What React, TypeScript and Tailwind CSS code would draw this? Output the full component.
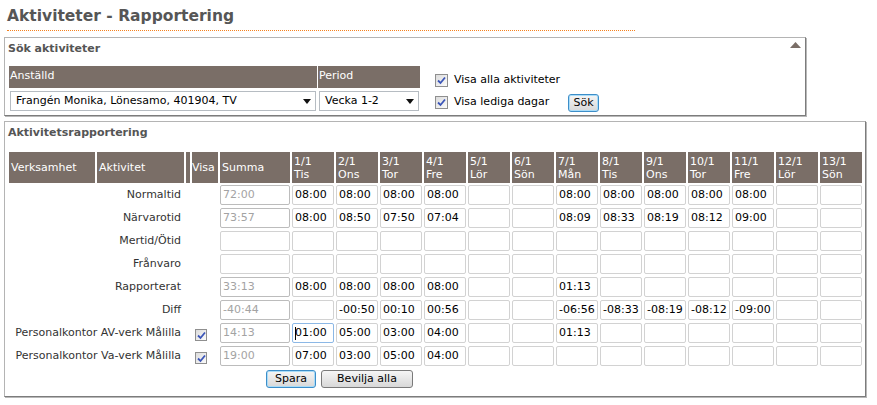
import React from 'react';

const days = [
  ['1/1', 'Tis'], ['2/1', 'Ons'], ['3/1', 'Tor'], ['4/1', 'Fre'], ['5/1', 'Lör'], ['6/1', 'Sön'],
  ['7/1', 'Mån'], ['8/1', 'Tis'], ['9/1', 'Ons'], ['10/1', 'Tor'], ['11/1', 'Fre'], ['12/1', 'Lör'], ['13/1', 'Sön'],
];

type Row = { label: string; summa: string | null; values: string[]; visa?: boolean; focus?: number };

const rows: Row[] = [
  { label: 'Normaltid', summa: '72:00', values: ['08:00', '08:00', '08:00', '08:00', '', '', '08:00', '08:00', '08:00', '08:00', '08:00', '', ''] },
  { label: 'Närvarotid', summa: '73:57', values: ['08:00', '08:50', '07:50', '07:04', '', '', '08:09', '08:33', '08:19', '08:12', '09:00', '', ''] },
  { label: 'Mertid/Ötid', summa: null, values: Array(13).fill('') },
  { label: 'Frånvaro', summa: null, values: Array(13).fill('') },
  { label: 'Rapporterat', summa: '33:13', values: ['08:00', '08:00', '08:00', '08:00', '', '', '01:13', '', '', '', '', '', ''] },
  { label: 'Diff', summa: '-40:44', values: ['', '-00:50', '00:10', '00:56', '', '', '-06:56', '-08:33', '-08:19', '-08:12', '-09:00', '', ''] },
  { label: 'Personalkontor AV-verk Målilla', summa: '14:13', visa: true, focus: 0, values: ['01:00', '05:00', '03:00', '04:00', '', '', '01:13', '', '', '', '', '', ''] },
  { label: 'Personalkontor Va-verk Målilla', summa: '19:00', visa: true, values: ['07:00', '03:00', '05:00', '04:00', '', '', '', '', '', '', '', '', ''] },
];

const Check = ({ size = 'w-[13px] h-[13px]' }: { size?: string }) => (
  <span className={`inline-flex ${size} border border-[#8f8f8f] bg-gradient-to-br from-[#dcdcdc] to-[#fbfbfb] items-center justify-center align-middle`}>
    <svg width="9" height="9" viewBox="0 0 9 9">
      <path d="M1 4.5 L3.5 7 L8 1.5" fill="none" stroke="#3b55b8" strokeWidth="1.8" />
    </svg>
  </span>
);

const Select = ({ text, width }: { text: string; width: string }) => (
  <div className={`${width} h-[20px] border border-[#b6bcc2] bg-white flex items-center pl-[5px] pr-[4px] text-black`}>
    <span className="flex-1 whitespace-nowrap">{text}</span>
    <svg width="8" height="5" viewBox="0 0 8 5">
      <path d="M0 0 H8 L4 5 Z" fill="#111" />
    </svg>
  </div>
);

const Btn = ({ children, blue, width }: { children: React.ReactNode; blue?: boolean; width: string }) => (
  <button
    className={`${width} h-[18px] rounded-[3px] border leading-[14px] text-black bg-gradient-to-b from-[#f6f6f6] to-[#d8d8d8] ${
      blue ? 'border-[#3d8ec9] shadow-[inset_0_0_0_1px_#a9dcf8]' : 'border-[#7a7a7a]'
    }`}
  >
    {children}
  </button>
);

const Cell = ({ value, summa, focus }: { value: string; summa?: boolean; focus?: boolean }) => (
  <div
    className={`h-[20px] rounded-[2px] border bg-white pl-[2px] flex items-center whitespace-nowrap overflow-hidden ${
      summa ? 'border-[#bcbcbc] text-[#a3a3a3]' : focus ? 'border-[#8cb8e6] text-black' : 'border-[#d2d2d2] text-black'
    }`}
  >
    {focus && <span className="inline-block w-px h-[13px] bg-black -mr-px" />}
    {value}
  </div>
);

const th = 'bg-[#7a6e67] text-white font-normal text-left align-middle leading-[13px] px-[2px]';

export default function App() {
  return (
    <div className="w-[877px] h-[405px] bg-white overflow-hidden font-['DejaVu_Sans',Verdana,sans-serif] text-[11px] text-[#333]">
      <div className="pl-[7px] pt-[6px]">
        <h1 className="w-[628px] border-b border-dotted border-b-[#f5821f] text-[15.5px] font-bold text-[#565656] leading-[20px] pb-[4px]">
          Aktiviteter - Rapportering
        </h1>
      </div>

      <div className="relative ml-[4px] mt-[6px] w-[802px] h-[79px] border border-[#b4b4b4] border-r-[#7c7c7c] border-b-[#7c7c7c] shadow-[1px_1px_0_#b8b8b8]">
        <svg className="absolute right-[4px] top-[4px]" width="11" height="6" viewBox="0 0 11 6">
          <path d="M0 6 L5.5 0 L11 6 Z" fill="#7a6e67" />
        </svg>
        <div className="pl-[3px] pt-[4px] font-bold text-[#555] leading-[14px]">Sök aktiviteter</div>
        <div className="flex mt-[10px] pl-[4px]">
          <div className="grid grid-cols-[308px_102px] gap-x-[1px] gap-y-[3px]">
            <div className="h-[22px] bg-[#7a6e67] text-white pl-[1px] leading-[20px]">Anställd</div>
            <div className="h-[22px] bg-[#7a6e67] text-white pl-[1px] leading-[20px]">Period</div>
            <div className="px-[1px]">
              <Select text="Frangén Monika, Lönesamo, 401904, TV" width="w-[306px]" />
            </div>
            <div className="px-[1px]">
              <Select text="Vecka 1-2" width="w-[100px]" />
            </div>
          </div>
          <div className="ml-[15px] pt-[8px] text-black">
            <div className="flex items-center gap-[6px] h-[13px]">
              <Check />
              <span>Visa alla aktiviteter</span>
            </div>
            <div className="flex items-center mt-[7px] h-[17px]">
              <Check />
              <span className="ml-[6px] w-[114px]">Visa lediga dagar</span>
              <Btn blue width="w-[31px]">Sök</Btn>
            </div>
          </div>
        </div>
      </div>

      <div className="ml-[4px] mt-[5px] w-[862px] h-[276px] border border-[#b4b4b4] border-r-[#7c7c7c] border-b-[#7c7c7c] shadow-[1px_1px_0_#b8b8b8]">
        <div className="pl-[3px] pt-[4px] font-bold text-[#555] leading-[14px]">Aktivitetsrapportering</div>
        <table className="table-fixed border-separate border-spacing-x-[2px] border-spacing-y-[2px] mt-[10px] ml-[2px] w-[857px]">
          <colgroup>
            <col className="w-[86px]" />
            <col className="w-[87px]" />
            <col className="w-[4px]" />
            <col className="w-[26px]" />
            <col className="w-[70px]" />
            {days.map((_, i) => (
              <col key={i} className="w-[42px]" />
            ))}
          </colgroup>
          <thead>
            <tr className="h-[31px]">
              <th className={th}>Verksamhet</th>
              <th className={th}>Aktivitet</th>
              <th className="bg-[#7a6e67] p-0" />
              <th className={`${th} !px-0`}>Visa</th>
              <th className={th}>Summa</th>
              {days.map(([d, w]) => (
                <th key={d} className={th}>
                  {d}
                  <br />
                  {w}
                </th>
              ))}
            </tr>
          </thead>
          <tbody>
            {rows.map((r) => (
              <tr key={r.label}>
                <td colSpan={2} className="h-[21px] p-0 pr-[3px] text-right align-top leading-[20px] whitespace-nowrap">
                  {r.label}
                </td>
                <td className="p-0" />
                <td className="p-0 pl-[3px] align-top pt-[4px]">{r.visa && <Check size="w-[12px] h-[12px]" />}</td>
                <td className="p-0 align-top">
                  <Cell value={r.summa ?? ''} summa={r.summa !== null} />
                </td>
                {r.values.map((v, i) => (
                  <td key={i} className="p-0 align-top">
                    <Cell value={v} focus={r.focus === i} />
                  </td>
                ))}
              </tr>
            ))}
          </tbody>
        </table>
        <div className="flex gap-[5px] pl-[261px] mt-[1px]">
          <Btn blue width="w-[50px]">Spara</Btn>
          <Btn width="w-[92px]">Bevilja alla</Btn>
        </div>
      </div>
    </div>
  );
}
